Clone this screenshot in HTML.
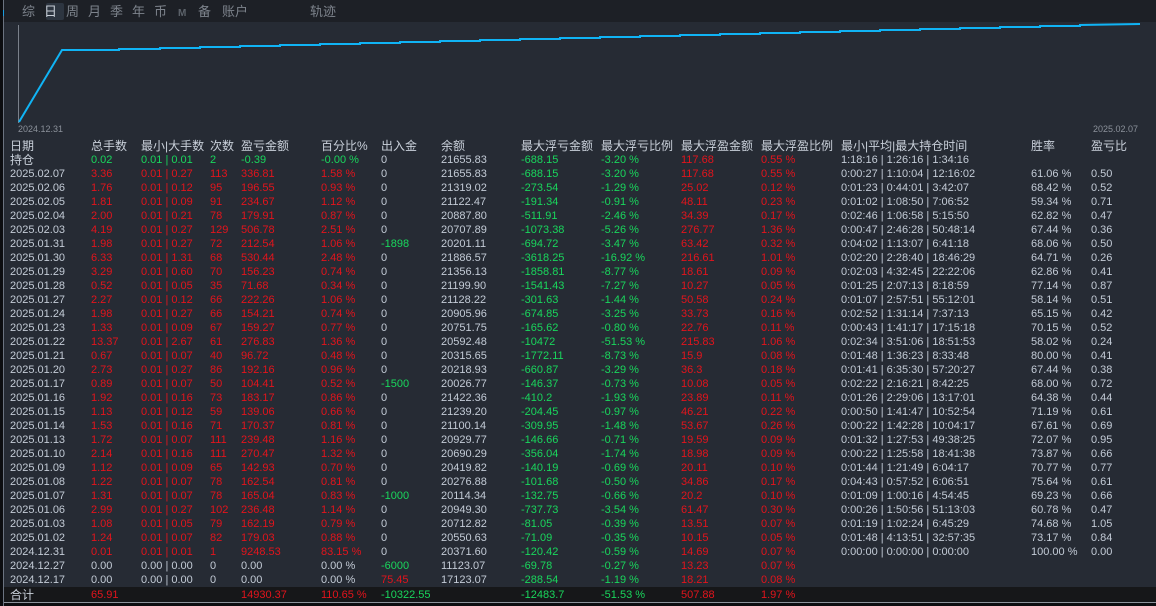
<!DOCTYPE html>
<html><head><meta charset="utf-8"><style>
*{margin:0;padding:0;box-sizing:border-box}
body{width:1156px;height:606px;overflow:hidden;background:#262b34;font-family:"Liberation Sans","Noto Sans CJK SC",sans-serif;font-size:11px;color:#c3cbd6;position:relative}
#lb{position:absolute;left:0;top:0;width:3px;height:606px;background:#0c0d10}
#lb2{position:absolute;left:3px;top:0;width:1px;height:606px;background:#6b7380}
#tabs{position:absolute;left:4px;top:0;width:1152px;height:22px;background:#1d2026}
.t{position:absolute;top:4px;font-size:13px;color:#7d838c;line-height:15px}
#sel{position:absolute;left:42px;top:3px;width:18px;height:17px;background:#2d3540;border-radius:2px}
#chart{position:absolute;left:4px;top:22px;width:1152px;height:114px}
.r{position:absolute;left:4px;width:1152px;height:14px;line-height:14px;white-space:nowrap}
.r span{position:absolute;top:0}
.a{left:6px}.b{left:87px}.c{left:137px}.d{left:206px}.e{left:237px}.f{left:317px}.g{left:377px}.h{left:437px}.i{left:517px}.j{left:597px}.k{left:677px}.l{left:757px}.m{left:837px}.n{left:1027px}.o{left:1087px}
.R{color:#e3141c}.G{color:#19d65c}
.hd{font-size:12px;color:#c9d0da}
#tot{background:#161719}
#bot{position:absolute;left:4px;top:602px;width:1152px;height:4px;background:#0c0d10;border-top:1px solid #8d939c}
</style></head><body>
<div id="lb"></div><div id="lb2"></div>
<div style="position:absolute;left:3px;top:10px;width:1px;height:6px;background:#1a9de0"></div>
<div id="tabs"><div id="sel"></div>
<span class="t" style="left:18px">综</span><span class="t" style="left:40px;color:#c7cdd6">日</span><span class="t" style="left:62px">周</span><span class="t" style="left:84px">月</span><span class="t" style="left:106px">季</span><span class="t" style="left:128px">年</span><span class="t" style="left:150px">币</span><span class="t" style="left:174px;font-size:10px;top:6px;font-weight:bold;color:#5d636b">M</span><span class="t" style="left:194px">备</span><span class="t" style="left:218px">账户</span><span class="t" style="left:306px">轨迹</span></div>
<svg id="chart" width="1152" height="114" viewBox="0 0 1152 114">
<line x1="14.5" y1="3" x2="14.5" y2="101" stroke="#7a808a" stroke-width="1"/>
<polyline fill="none" stroke="#10b4f5" stroke-width="2" points="15,100 58,28 75,28 115,28 115,27 156,27 156,26 196,26 196,25 236,25 236,24 276,24 276,23 316,23 316,22 356,22 356,21 396,21 396,20 436,20 436,19 476,19 476,18 516,18 516,17 556,17 556,16 596,16 596,15 636,15 636,14 676,14 676,13 716,13 716,12 756,12 756,11 796,11 796,10 836,10 836,9 876,9 876,8 916,8 916,7 956,7 956,6 996,6 996,5 1036,5 1036,4 1076,4 1076,3 1136,2"/>
<text x="14" y="110" font-size="9" fill="#8b919a" font-family="Liberation Sans">2024.12.31</text>
<text x="1134" y="110" font-size="9" fill="#8b919a" font-family="Liberation Sans" text-anchor="end">2025.02.07</text>
</svg>
<div class="r hd" style="top:139px"><span class="a">日期</span><span class="b">总手数</span><span class="c">最小|大手数</span><span class="d">次数</span><span class="e">盈亏金额</span><span class="f">百分比%</span><span class="g">出入金</span><span class="h">余额</span><span class="i">最大浮亏金额</span><span class="j">最大浮亏比例</span><span class="k">最大浮盈金额</span><span class="l">最大浮盈比例</span><span class="m">最小|平均|最大持仓时间</span><span class="n">胜率</span><span class="o">盈亏比</span></div>
<div class="r" style="top:153px"><span class="a hd">持仓</span><span class="b G">0.02</span><span class="c G">0.01 | 0.01</span><span class="d G">2</span><span class="e G">-0.39</span><span class="f G">-0.00 %</span><span class="g">0</span><span class="h">21655.83</span><span class="i G">-688.15</span><span class="j G">-3.20 %</span><span class="k R">117.68</span><span class="l R">0.55 %</span><span class="m">1:18:16 | 1:26:16 | 1:34:16</span></div>
<div class="r" style="top:167px"><span class="a">2025.02.07</span><span class="b R">3.36</span><span class="c R">0.01 | 0.27</span><span class="d R">113</span><span class="e R">336.81</span><span class="f R">1.58 %</span><span class="g">0</span><span class="h">21655.83</span><span class="i G">-688.15</span><span class="j G">-3.20 %</span><span class="k R">117.68</span><span class="l R">0.55 %</span><span class="m">0:00:27 | 1:10:04 | 12:16:02</span><span class="n">61.06 %</span><span class="o">0.50</span></div>
<div class="r" style="top:181px"><span class="a">2025.02.06</span><span class="b R">1.76</span><span class="c R">0.01 | 0.12</span><span class="d R">95</span><span class="e R">196.55</span><span class="f R">0.93 %</span><span class="g">0</span><span class="h">21319.02</span><span class="i G">-273.54</span><span class="j G">-1.29 %</span><span class="k R">25.02</span><span class="l R">0.12 %</span><span class="m">0:01:23 | 0:44:01 | 3:42:07</span><span class="n">68.42 %</span><span class="o">0.52</span></div>
<div class="r" style="top:195px"><span class="a">2025.02.05</span><span class="b R">1.81</span><span class="c R">0.01 | 0.09</span><span class="d R">91</span><span class="e R">234.67</span><span class="f R">1.12 %</span><span class="g">0</span><span class="h">21122.47</span><span class="i G">-191.34</span><span class="j G">-0.91 %</span><span class="k R">48.11</span><span class="l R">0.23 %</span><span class="m">0:01:02 | 1:08:50 | 7:06:52</span><span class="n">59.34 %</span><span class="o">0.71</span></div>
<div class="r" style="top:209px"><span class="a">2025.02.04</span><span class="b R">2.00</span><span class="c R">0.01 | 0.21</span><span class="d R">78</span><span class="e R">179.91</span><span class="f R">0.87 %</span><span class="g">0</span><span class="h">20887.80</span><span class="i G">-511.91</span><span class="j G">-2.46 %</span><span class="k R">34.39</span><span class="l R">0.17 %</span><span class="m">0:02:46 | 1:06:58 | 5:15:50</span><span class="n">62.82 %</span><span class="o">0.47</span></div>
<div class="r" style="top:223px"><span class="a">2025.02.03</span><span class="b R">4.19</span><span class="c R">0.01 | 0.27</span><span class="d R">129</span><span class="e R">506.78</span><span class="f R">2.51 %</span><span class="g">0</span><span class="h">20707.89</span><span class="i G">-1073.38</span><span class="j G">-5.26 %</span><span class="k R">276.77</span><span class="l R">1.36 %</span><span class="m">0:00:47 | 2:46:28 | 50:48:14</span><span class="n">67.44 %</span><span class="o">0.36</span></div>
<div class="r" style="top:237px"><span class="a">2025.01.31</span><span class="b R">1.98</span><span class="c R">0.01 | 0.27</span><span class="d R">72</span><span class="e R">212.54</span><span class="f R">1.06 %</span><span class="g G">-1898</span><span class="h">20201.11</span><span class="i G">-694.72</span><span class="j G">-3.47 %</span><span class="k R">63.42</span><span class="l R">0.32 %</span><span class="m">0:04:02 | 1:13:07 | 6:41:18</span><span class="n">68.06 %</span><span class="o">0.50</span></div>
<div class="r" style="top:251px"><span class="a">2025.01.30</span><span class="b R">6.33</span><span class="c R">0.01 | 1.31</span><span class="d R">68</span><span class="e R">530.44</span><span class="f R">2.48 %</span><span class="g">0</span><span class="h">21886.57</span><span class="i G">-3618.25</span><span class="j G">-16.92 %</span><span class="k R">216.61</span><span class="l R">1.01 %</span><span class="m">0:02:20 | 2:28:40 | 18:46:29</span><span class="n">64.71 %</span><span class="o">0.26</span></div>
<div class="r" style="top:265px"><span class="a">2025.01.29</span><span class="b R">3.29</span><span class="c R">0.01 | 0.60</span><span class="d R">70</span><span class="e R">156.23</span><span class="f R">0.74 %</span><span class="g">0</span><span class="h">21356.13</span><span class="i G">-1858.81</span><span class="j G">-8.77 %</span><span class="k R">18.61</span><span class="l R">0.09 %</span><span class="m">0:02:03 | 4:32:45 | 22:22:06</span><span class="n">62.86 %</span><span class="o">0.41</span></div>
<div class="r" style="top:279px"><span class="a">2025.01.28</span><span class="b R">0.52</span><span class="c R">0.01 | 0.05</span><span class="d R">35</span><span class="e R">71.68</span><span class="f R">0.34 %</span><span class="g">0</span><span class="h">21199.90</span><span class="i G">-1541.43</span><span class="j G">-7.27 %</span><span class="k R">10.27</span><span class="l R">0.05 %</span><span class="m">0:01:25 | 2:07:13 | 8:18:59</span><span class="n">77.14 %</span><span class="o">0.87</span></div>
<div class="r" style="top:293px"><span class="a">2025.01.27</span><span class="b R">2.27</span><span class="c R">0.01 | 0.12</span><span class="d R">66</span><span class="e R">222.26</span><span class="f R">1.06 %</span><span class="g">0</span><span class="h">21128.22</span><span class="i G">-301.63</span><span class="j G">-1.44 %</span><span class="k R">50.58</span><span class="l R">0.24 %</span><span class="m">0:01:07 | 2:57:51 | 55:12:01</span><span class="n">58.14 %</span><span class="o">0.51</span></div>
<div class="r" style="top:307px"><span class="a">2025.01.24</span><span class="b R">1.98</span><span class="c R">0.01 | 0.27</span><span class="d R">66</span><span class="e R">154.21</span><span class="f R">0.74 %</span><span class="g">0</span><span class="h">20905.96</span><span class="i G">-674.85</span><span class="j G">-3.25 %</span><span class="k R">33.73</span><span class="l R">0.16 %</span><span class="m">0:02:52 | 1:31:14 | 7:37:13</span><span class="n">65.15 %</span><span class="o">0.42</span></div>
<div class="r" style="top:321px"><span class="a">2025.01.23</span><span class="b R">1.33</span><span class="c R">0.01 | 0.09</span><span class="d R">67</span><span class="e R">159.27</span><span class="f R">0.77 %</span><span class="g">0</span><span class="h">20751.75</span><span class="i G">-165.62</span><span class="j G">-0.80 %</span><span class="k R">22.76</span><span class="l R">0.11 %</span><span class="m">0:00:43 | 1:41:17 | 17:15:18</span><span class="n">70.15 %</span><span class="o">0.52</span></div>
<div class="r" style="top:335px"><span class="a">2025.01.22</span><span class="b R">13.37</span><span class="c R">0.01 | 2.67</span><span class="d R">61</span><span class="e R">276.83</span><span class="f R">1.36 %</span><span class="g">0</span><span class="h">20592.48</span><span class="i G">-10472</span><span class="j G">-51.53 %</span><span class="k R">215.83</span><span class="l R">1.06 %</span><span class="m">0:02:34 | 3:51:06 | 18:51:53</span><span class="n">58.02 %</span><span class="o">0.24</span></div>
<div class="r" style="top:349px"><span class="a">2025.01.21</span><span class="b R">0.67</span><span class="c R">0.01 | 0.07</span><span class="d R">40</span><span class="e R">96.72</span><span class="f R">0.48 %</span><span class="g">0</span><span class="h">20315.65</span><span class="i G">-1772.11</span><span class="j G">-8.73 %</span><span class="k R">15.9</span><span class="l R">0.08 %</span><span class="m">0:01:48 | 1:36:23 | 8:33:48</span><span class="n">80.00 %</span><span class="o">0.41</span></div>
<div class="r" style="top:363px"><span class="a">2025.01.20</span><span class="b R">2.73</span><span class="c R">0.01 | 0.27</span><span class="d R">86</span><span class="e R">192.16</span><span class="f R">0.96 %</span><span class="g">0</span><span class="h">20218.93</span><span class="i G">-660.87</span><span class="j G">-3.29 %</span><span class="k R">36.3</span><span class="l R">0.18 %</span><span class="m">0:01:41 | 6:35:30 | 57:20:27</span><span class="n">67.44 %</span><span class="o">0.38</span></div>
<div class="r" style="top:377px"><span class="a">2025.01.17</span><span class="b R">0.89</span><span class="c R">0.01 | 0.07</span><span class="d R">50</span><span class="e R">104.41</span><span class="f R">0.52 %</span><span class="g G">-1500</span><span class="h">20026.77</span><span class="i G">-146.37</span><span class="j G">-0.73 %</span><span class="k R">10.08</span><span class="l R">0.05 %</span><span class="m">0:02:22 | 2:16:21 | 8:42:25</span><span class="n">68.00 %</span><span class="o">0.72</span></div>
<div class="r" style="top:391px"><span class="a">2025.01.16</span><span class="b R">1.92</span><span class="c R">0.01 | 0.16</span><span class="d R">73</span><span class="e R">183.17</span><span class="f R">0.86 %</span><span class="g">0</span><span class="h">21422.36</span><span class="i G">-410.2</span><span class="j G">-1.93 %</span><span class="k R">23.89</span><span class="l R">0.11 %</span><span class="m">0:01:26 | 2:29:06 | 13:17:01</span><span class="n">64.38 %</span><span class="o">0.44</span></div>
<div class="r" style="top:405px"><span class="a">2025.01.15</span><span class="b R">1.13</span><span class="c R">0.01 | 0.12</span><span class="d R">59</span><span class="e R">139.06</span><span class="f R">0.66 %</span><span class="g">0</span><span class="h">21239.20</span><span class="i G">-204.45</span><span class="j G">-0.97 %</span><span class="k R">46.21</span><span class="l R">0.22 %</span><span class="m">0:00:50 | 1:41:47 | 10:52:54</span><span class="n">71.19 %</span><span class="o">0.61</span></div>
<div class="r" style="top:419px"><span class="a">2025.01.14</span><span class="b R">1.53</span><span class="c R">0.01 | 0.16</span><span class="d R">71</span><span class="e R">170.37</span><span class="f R">0.81 %</span><span class="g">0</span><span class="h">21100.14</span><span class="i G">-309.95</span><span class="j G">-1.48 %</span><span class="k R">53.67</span><span class="l R">0.26 %</span><span class="m">0:00:22 | 1:42:28 | 10:04:17</span><span class="n">67.61 %</span><span class="o">0.69</span></div>
<div class="r" style="top:433px"><span class="a">2025.01.13</span><span class="b R">1.72</span><span class="c R">0.01 | 0.07</span><span class="d R">111</span><span class="e R">239.48</span><span class="f R">1.16 %</span><span class="g">0</span><span class="h">20929.77</span><span class="i G">-146.66</span><span class="j G">-0.71 %</span><span class="k R">19.59</span><span class="l R">0.09 %</span><span class="m">0:01:32 | 1:27:53 | 49:38:25</span><span class="n">72.07 %</span><span class="o">0.95</span></div>
<div class="r" style="top:447px"><span class="a">2025.01.10</span><span class="b R">2.14</span><span class="c R">0.01 | 0.16</span><span class="d R">111</span><span class="e R">270.47</span><span class="f R">1.32 %</span><span class="g">0</span><span class="h">20690.29</span><span class="i G">-356.04</span><span class="j G">-1.74 %</span><span class="k R">18.98</span><span class="l R">0.09 %</span><span class="m">0:00:22 | 1:25:58 | 18:41:38</span><span class="n">73.87 %</span><span class="o">0.66</span></div>
<div class="r" style="top:461px"><span class="a">2025.01.09</span><span class="b R">1.12</span><span class="c R">0.01 | 0.09</span><span class="d R">65</span><span class="e R">142.93</span><span class="f R">0.70 %</span><span class="g">0</span><span class="h">20419.82</span><span class="i G">-140.19</span><span class="j G">-0.69 %</span><span class="k R">20.11</span><span class="l R">0.10 %</span><span class="m">0:01:44 | 1:21:49 | 6:04:17</span><span class="n">70.77 %</span><span class="o">0.77</span></div>
<div class="r" style="top:475px"><span class="a">2025.01.08</span><span class="b R">1.22</span><span class="c R">0.01 | 0.07</span><span class="d R">78</span><span class="e R">162.54</span><span class="f R">0.81 %</span><span class="g">0</span><span class="h">20276.88</span><span class="i G">-101.68</span><span class="j G">-0.50 %</span><span class="k R">34.86</span><span class="l R">0.17 %</span><span class="m">0:04:43 | 0:57:52 | 6:06:51</span><span class="n">75.64 %</span><span class="o">0.61</span></div>
<div class="r" style="top:489px"><span class="a">2025.01.07</span><span class="b R">1.31</span><span class="c R">0.01 | 0.07</span><span class="d R">78</span><span class="e R">165.04</span><span class="f R">0.83 %</span><span class="g G">-1000</span><span class="h">20114.34</span><span class="i G">-132.75</span><span class="j G">-0.66 %</span><span class="k R">20.2</span><span class="l R">0.10 %</span><span class="m">0:01:09 | 1:00:16 | 4:54:45</span><span class="n">69.23 %</span><span class="o">0.66</span></div>
<div class="r" style="top:503px"><span class="a">2025.01.06</span><span class="b R">2.99</span><span class="c R">0.01 | 0.27</span><span class="d R">102</span><span class="e R">236.48</span><span class="f R">1.14 %</span><span class="g">0</span><span class="h">20949.30</span><span class="i G">-737.73</span><span class="j G">-3.54 %</span><span class="k R">61.47</span><span class="l R">0.30 %</span><span class="m">0:00:26 | 1:50:56 | 51:13:03</span><span class="n">60.78 %</span><span class="o">0.47</span></div>
<div class="r" style="top:517px"><span class="a">2025.01.03</span><span class="b R">1.08</span><span class="c R">0.01 | 0.05</span><span class="d R">79</span><span class="e R">162.19</span><span class="f R">0.79 %</span><span class="g">0</span><span class="h">20712.82</span><span class="i G">-81.05</span><span class="j G">-0.39 %</span><span class="k R">13.51</span><span class="l R">0.07 %</span><span class="m">0:01:19 | 1:02:24 | 6:45:29</span><span class="n">74.68 %</span><span class="o">1.05</span></div>
<div class="r" style="top:531px"><span class="a">2025.01.02</span><span class="b R">1.24</span><span class="c R">0.01 | 0.07</span><span class="d R">82</span><span class="e R">179.03</span><span class="f R">0.88 %</span><span class="g">0</span><span class="h">20550.63</span><span class="i G">-71.09</span><span class="j G">-0.35 %</span><span class="k R">10.15</span><span class="l R">0.05 %</span><span class="m">0:01:48 | 4:13:51 | 32:57:35</span><span class="n">73.17 %</span><span class="o">0.84</span></div>
<div class="r" style="top:545px"><span class="a">2024.12.31</span><span class="b R">0.01</span><span class="c R">0.01 | 0.01</span><span class="d R">1</span><span class="e R">9248.53</span><span class="f R">83.15 %</span><span class="g">0</span><span class="h">20371.60</span><span class="i G">-120.42</span><span class="j G">-0.59 %</span><span class="k R">14.69</span><span class="l R">0.07 %</span><span class="m">0:00:00 | 0:00:00 | 0:00:00</span><span class="n">100.00 %</span><span class="o">0.00</span></div>
<div class="r" style="top:559px"><span class="a">2024.12.27</span><span class="b">0.00</span><span class="c">0.00 | 0.00</span><span class="d">0</span><span class="e">0.00</span><span class="f">0.00 %</span><span class="g G">-6000</span><span class="h">11123.07</span><span class="i G">-69.78</span><span class="j G">-0.27 %</span><span class="k R">13.23</span><span class="l R">0.07 %</span></div>
<div class="r" style="top:573px"><span class="a">2024.12.17</span><span class="b">0.00</span><span class="c">0.00 | 0.00</span><span class="d">0</span><span class="e">0.00</span><span class="f">0.00 %</span><span class="g R">75.45</span><span class="h">17123.07</span><span class="i G">-288.54</span><span class="j G">-1.19 %</span><span class="k R">18.21</span><span class="l R">0.08 %</span></div>
<div class="r" id="tot" style="top:587px;height:15px;line-height:16px"><span class="a hd">合计</span><span class="b R">65.91</span><span class="e R">14930.37</span><span class="f R">110.65 %</span><span class="g G">-10322.55</span><span class="i G">-12483.7</span><span class="j G">-51.53 %</span><span class="k R">507.88</span><span class="l R">1.97 %</span></div>
<div id="bot"></div>
</body></html>
